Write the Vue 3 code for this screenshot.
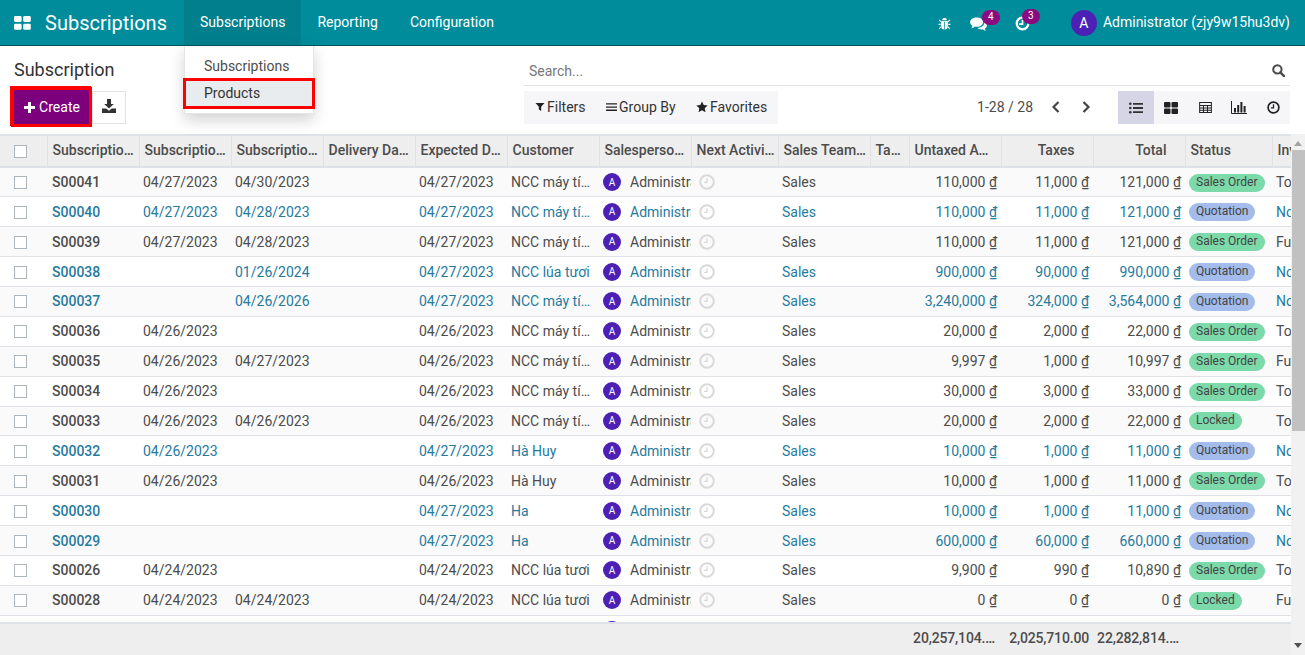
<script setup>
const columns = [47, 92, 92, 92, 92, 92, 92, 92, 87, 92, 39, 92, 92, 92, 87, 140]

const headers = [
  { label: 'Subscription Reference' },
  { label: 'Subscription Start Date' },
  { label: 'Subscription End Date' },
  { label: 'Delivery Date Planned' },
  { label: 'Expected Date' },
  { label: 'Customer' },
  { label: 'Salesperson Name' },
  { label: 'Next Activity' },
  { label: 'Sales Team Name' },
  { label: 'Tags', cls: 'tags' },
  { label: 'Untaxed Amount', cls: 'untaxed' },
  { label: 'Taxes', cls: 'num' },
  { label: 'Total', cls: 'num' },
  { label: 'Status' },
  { label: 'Invoice Status' },
]

const pc = 'NCC máy tính Hà Nội'
const rice = 'NCC lúa tươi'
const so = 'Sales Order'
const qt = 'Quotation'
const lk = 'Locked'
const toInv = 'To Invoice'
const noInv = 'Nothing to Invoice'
const full = 'Fully Invoiced'

const rows = [
  ['S00041', '04/27/2023', '04/30/2023', '04/27/2023', pc, '110,000', '11,000', '121,000', so, toInv],
  ['S00040', '04/27/2023', '04/28/2023', '04/27/2023', pc, '110,000', '11,000', '121,000', qt, noInv],
  ['S00039', '04/27/2023', '04/28/2023', '04/27/2023', pc, '110,000', '11,000', '121,000', so, full],
  ['S00038', '', '01/26/2024', '04/27/2023', rice, '900,000', '90,000', '990,000', qt, noInv],
  ['S00037', '', '04/26/2026', '04/27/2023', pc, '3,240,000', '324,000', '3,564,000', qt, noInv],
  ['S00036', '04/26/2023', '', '04/26/2023', pc, '20,000', '2,000', '22,000', so, toInv],
  ['S00035', '04/26/2023', '04/27/2023', '04/26/2023', pc, '9,997', '1,000', '10,997', so, full],
  ['S00034', '04/26/2023', '', '04/26/2023', pc, '30,000', '3,000', '33,000', so, toInv],
  ['S00033', '04/26/2023', '04/26/2023', '04/26/2023', pc, '20,000', '2,000', '22,000', lk, toInv],
  ['S00032', '04/26/2023', '', '04/27/2023', 'Hà Huy', '10,000', '1,000', '11,000', qt, noInv],
  ['S00031', '04/26/2023', '', '04/26/2023', 'Hà Huy', '10,000', '1,000', '11,000', so, toInv],
  ['S00030', '', '', '04/27/2023', 'Ha', '10,000', '1,000', '11,000', qt, noInv],
  ['S00029', '', '', '04/27/2023', 'Ha', '600,000', '60,000', '660,000', qt, noInv],
  ['S00026', '04/24/2023', '', '04/24/2023', rice, '9,900', '990', '10,890', so, toInv],
  ['S00028', '04/24/2023', '04/24/2023', '04/24/2023', rice, '0', '0', '0', lk, full],
  ['S00027', '04/24/2023', '', '04/24/2023', rice, '9,900', '990', '10,890', so, toInv],
]
</script>

<template>
  <div class="app">
    <header class="navbar">
      <svg class="apps" viewBox="0 0 17 14" width="17" height="14">
        <rect x="0" y="0" width="7.6" height="6" rx="1.4" />
        <rect x="9.2" y="0" width="7.6" height="6" rx="1.4" />
        <rect x="0" y="7.8" width="7.6" height="6" rx="1.4" />
        <rect x="9.2" y="7.8" width="7.6" height="6" rx="1.4" />
      </svg>
      <span class="brand">Subscriptions</span>
      <nav class="menu">
        <a class="active">Subscriptions</a>
        <a>Reporting</a>
        <a>Configuration</a>
      </nav>
      <div class="systray">
        <svg class="bug" viewBox="0 0 14 14" width="13" height="13">
          <path d="M4.400 3.600a2.600 2.600 0 0 1 5.200 0z" />
          <path d="M3.400 4.400h7.200v5.400a3.600 3.600 0 0 1-7.200 0z" />
          <path d="M3.200 5 1.200 3.200M10.800 5l2-1.800M3 8H.6M11 8h2.400M3.400 10.600 1.400 12.600M10.600 10.600l2 2" stroke="#fff" stroke-width="1.200" fill="none" />
          <path d="M7 5v8.500" stroke="#008c9b" stroke-width=".8" />
        </svg>
        <span class="tray-item chat">
          <svg viewBox="0 0 18 15" width="17" height="14">
            <path d="M7 .5c3.800 0 7 2.200 7 5s-3.200 5-7 5c-.7 0-1.400-.1-2-.2C4 11.300 2.700 12 1.200 12.200c.8-.8 1.200-1.700 1.300-2.700C1.100 8.500 0 7.100 0 5.500c0-2.800 3.200-5 7-5z" />
            <path d="M15.200 5.200c1.700.9 2.800 2.200 2.800 3.800 0 1.400-.9 2.600-2.200 3.400.1.800.4 1.500 1 2.200-1.300-.2-2.300-.7-3.100-1.500-.5.1-1.100.2-1.700.2-1.700 0-3.200-.6-4.200-1.500 4 0 7.800-2.200 7.400-6.600z" />
          </svg>
          <b class="count c4">4</b>
        </span>
        <span class="tray-item clock">
          <svg viewBox="0 0 16 16" width="15" height="15">
            <circle cx="8" cy="8" r="6.200" fill="none" stroke="#fff" stroke-width="2.400" />
            <path d="M8 4v4.600H4.400" fill="none" stroke="#fff" stroke-width="1.800" />
          </svg>
          <b class="count c3">3</b>
        </span>
        <span class="user">
          <span class="avatar big">A</span>
          <span class="user-name">Administrator (zjy9w15hu3dv)</span>
        </span>
      </div>
    </header>

    <div class="dropdown">
      <a>Subscriptions</a>
      <a class="marked">Products</a>
    </div>

    <section class="control-panel">
      <div class="cp-left">
        <h1>Subscription</h1>
        <div class="actions">
          <button class="create">
            <svg viewBox="0 0 11 11" width="11" height="11"><path d="M4 0h3v4h4v3H7v4H4V7H0V4h4z" /></svg>
            Create
          </button>
          <button class="download">
            <svg viewBox="0 0 14 14" width="14" height="14">
              <path d="M5 0h4v5h2.800L7 9.600 2.200 5H5z" />
              <path d="M0 9.400h4.200L7 11.800l2.800-2.400H14V14H0z" />
            </svg>
          </button>
        </div>
      </div>
      <div class="cp-right">
        <div class="search">
          <span>Search...</span>
          <svg viewBox="0 0 14 14" width="13" height="13">
            <circle cx="5.800" cy="5.800" r="4.500" fill="none" stroke="#4c4c4c" stroke-width="2.200" />
            <path d="M9 9l4 4" stroke="#4c4c4c" stroke-width="2.600" stroke-linecap="round" />
          </svg>
        </div>
        <div class="cp-bottom">
          <div class="filters">
            <span class="filter-item">
              <svg viewBox="0 0 10 10" width="10" height="9"><path d="M0 1h10L6.300 5.400V10L3.700 8.400v-3z" /></svg>
              Filters
            </span>
            <span class="filter-item">
              <svg viewBox="0 0 11 10" width="11" height="10"><path d="M0 1.200h11v1.300H0zM0 4.400h11v1.300H0zM0 7.600h11v1.300H0z" /></svg>
              Group By
            </span>
            <span class="filter-item">
              <svg viewBox="0 0 12 12" width="12" height="12"><path d="M6 .4l1.700 3.700 4 .5-3 2.700.8 4L6 9.300 2.500 11.300l.8-4-3-2.700 4-.5z" /></svg>
              Favorites
            </span>
          </div>
          <div class="pager">
            <span class="pager-text">1-28 / 28</span>
            <svg viewBox="0 0 10 14" width="10" height="14"><path d="M7.500 2 2.500 7l5 5" /></svg>
            <svg viewBox="0 0 10 14" width="10" height="14"><path d="M2.500 2l5 5-5 5" /></svg>
          </div>
          <div class="views">
            <span class="view on">
              <svg viewBox="0 0 14 12" width="14" height="12">
                <circle cx="1.300" cy="1.800" r="1.300" /><circle cx="1.300" cy="6" r="1.300" /><circle cx="1.300" cy="10.200" r="1.300" />
                <path d="M4 .9h10v1.800H4zM4 5.100h10v1.800H4zM4 9.300h10v1.800H4z" />
              </svg>
            </span>
            <span class="view">
              <svg viewBox="0 0 14 12" width="14" height="12">
                <rect width="6.500" height="5.400" rx="1" /><rect x="7.500" width="6.500" height="5.400" rx="1" />
                <rect y="6.600" width="6.500" height="5.400" rx="1" /><rect x="7.500" y="6.600" width="6.500" height="5.400" rx="1" />
              </svg>
            </span>
            <span class="view">
              <svg viewBox="0 0 14 12" width="13" height="11">
                <path d="M.6.6h12.800v10.800H.6zM.6 3.900h12.800M.6 6.600h12.800M.6 9.100h12.800M4.800 3.900v7.500M9.200 3.900v7.500" fill="none" stroke="#222" stroke-width="1.100" />
              </svg>
            </span>
            <span class="view">
              <svg viewBox="0 0 16 13" width="16" height="13">
                <path d="M.5 0v12.500H16" fill="none" stroke="#222" stroke-width="1" />
                <path d="M3 7h2v4.500H3zM6.200 4h2v7.500h-2zM9.400 1h2v10.500h-2zM12.600 5h2v6.500h-2z" />
              </svg>
            </span>
            <span class="view">
              <svg viewBox="0 0 14 14" width="13" height="13">
                <circle cx="7" cy="7" r="5.800" fill="none" stroke="#222" stroke-width="1.800" />
                <path d="M7 3.500v4H4.200" fill="none" stroke="#222" stroke-width="1.400" />
              </svg>
            </span>
          </div>
        </div>
      </div>
    </section>

    <section class="content">
      <div class="list">
        <div class="scroller">
          <table class="grid">
            <colgroup>
              <col v-for="(w, i) in columns" :key="i" :style="{ width: w + 'px' }" />
            </colgroup>
            <thead>
              <tr>
                <th class="check"><i class="box"></i></th>
                <th v-for="h in headers" :key="h.label" :class="h.cls">{{ h.label }}</th>
              </tr>
            </thead>
            <tbody>
              <tr v-for="row in rows" :key="row[0]" :class="{ info: row[8] === 'Quotation' }">
                <td class="check"><i class="box"></i></td>
                <td class="ref">{{ row[0] }}</td>
                <td>{{ row[1] }}</td>
                <td>{{ row[2] }}</td>
                <td></td>
                <td>{{ row[3] }}</td>
                <td>{{ row[4] }}</td>
                <td class="person">
                  <div class="person-cell"><span class="avatar">A</span><span>Administrator</span></div>
                </td>
                <td class="activity">
                  <svg viewBox="0 0 16 16" width="16" height="16">
                    <circle cx="8" cy="8" r="6.800" fill="none" stroke="#d9d9d9" stroke-width="2" />
                    <path d="M8 4.200v4.200H5" fill="none" stroke="#d9d9d9" stroke-width="1.300" />
                  </svg>
                </td>
                <td>Sales</td>
                <td></td>
                <td class="amount">{{ row[5] }} ₫</td>
                <td class="amount">{{ row[6] }} ₫</td>
                <td class="amount">{{ row[7] }} ₫</td>
                <td class="status">
                  <span class="badge" :class="row[8] === 'Quotation' ? 'blue' : 'green'">{{ row[8] }}</span>
                </td>
                <td>{{ row[9] }}</td>
              </tr>
            </tbody>
          </table>
        </div>
        <table class="grid totals">
          <colgroup>
            <col v-for="(w, i) in columns" :key="i" :style="{ width: w + 'px' }" />
          </colgroup>
          <tbody>
            <tr>
              <td colspan="11"></td>
              <td>20,257,104.00</td>
              <td>2,025,710.00</td>
              <td>22,282,814.00</td>
              <td colspan="2"></td>
            </tr>
          </tbody>
        </table>
      </div>
      <div class="scrollbar">
        <i class="arrow up"></i>
        <i class="thumb"></i>
        <i class="arrow down"></i>
      </div>
    </section>
  </div>
</template>

<style scoped>
.app {
  position: relative;
  display: flex;
  flex-direction: column;
  width: 1305px;
  height: 655px;
  overflow: hidden;
  background: #fff;
  color: #4c4c4c;
  font-family: Roboto, "Noto Sans", sans-serif;
  font-size: 14px;
}

.navbar {
  display: flex;
  align-items: center;
  flex: none;
  height: 46px;
  box-sizing: border-box;
  padding-left: 14px;
  background: #008c9b;
  border-bottom: 1px solid #01555e;
  color: #fff;
}

.apps {
  fill: #fff;
}

.brand {
  margin-left: 14px;
  width: 139px;
  font-size: 20px;
}

.menu {
  display: flex;
  height: 100%;
}

.menu a {
  display: flex;
  align-items: center;
  padding: 0 16px 2px;
  font-size: 14px;
  box-sizing: border-box;
}

.menu a.active {
  background: #017f8d;
}

.systray {
  display: flex;
  align-items: center;
  margin-left: auto;
  padding-right: 15px;
}

.bug {
  fill: #fff;
  margin: 1px 19px 0 0;
}

.tray-item {
  position: relative;
  display: flex;
  margin-top: 2px;
  fill: #fff;
}

.chat {
  margin-right: 28px;
}

.clock {
  margin-right: 41px;
}

.count {
  position: absolute;
  top: -7px;
  left: 12px;
  min-width: 18px;
  height: 15px;
  border-radius: 8px;
  background: #8b0a7f;
  font-size: 10px;
  font-weight: 400;
  line-height: 14px;
  text-align: center;
}

.c3 {
  left: 7px;
}

.user {
  display: flex;
  align-items: center;
  gap: 6px;
}

.user-name {
  margin-bottom: 2px;
  font-size: 14px;
}

.avatar {
  display: inline-flex;
  align-items: center;
  justify-content: center;
  flex: none;
  width: 18px;
  height: 18px;
  border-radius: 50%;
  background: #4c1fb5;
  color: #fff;
  font-size: 10px;
}

.avatar.big {
  width: 26px;
  height: 26px;
  margin-top: 1px;
  font-size: 14px;
}

.dropdown {
  position: absolute;
  left: 184px;
  top: 46px;
  z-index: 5;
  width: 130px;
  height: 68px;
  box-sizing: border-box;
  padding-top: 7px;
  background: #fff;
  border: 1px solid #e4e4e4;
  border-top: 0;
  box-shadow: 0 6px 14px rgba(0, 0, 0, 0.18);
}

.dropdown a {
  display: block;
  height: 27px;
  padding-left: 19px;
  line-height: 27px;
}

.dropdown .marked {
  background: #e9ecef;
  outline: 3px solid #f00;
  outline-offset: -1px;
  color: #333;
}

.control-panel {
  display: flex;
  flex: none;
  height: 88px;
  box-sizing: border-box;
}

.cp-left {
  width: 524px;
  padding-left: 14px;
  box-sizing: border-box;
}

h1 {
  margin: 14px 0 11px;
  font-size: 18px;
  font-weight: 400;
  line-height: 20px;
  color: #333;
}

.actions {
  display: flex;
  align-items: flex-end;
  gap: 3px;
}

button {
  height: 33px;
  border-radius: 0;
  font-family: inherit;
  font-size: 14px;
  padding: 0;
}

.create {
  display: flex;
  align-items: center;
  justify-content: center;
  gap: 4px;
  width: 75px;
  height: 34px;
  margin-top: -1px;
  padding-left: 1px;
  border: 0;
  background: #7c007c;
  color: #fff;
  box-shadow: -1px -1px 0 3px #f00, 0 0 0 3px #f00;
  fill: #fff;
}

.download {
  width: 34px;
  border: 1px solid #e2e2e2;
  background: #fff;
  fill: #333;
}

.cp-right {
  flex: 1;
  padding-right: 15px;
}

.search {
  display: flex;
  align-items: center;
  justify-content: space-between;
  height: 39px;
  margin-top: 1px;
  padding: 9px 5px 0;
  box-sizing: border-box;
  border-bottom: 1px solid #dee2e6;
  color: #777;
}

.cp-bottom {
  display: flex;
  align-items: center;
  margin-top: 5px;
  height: 33px;
}

.filters {
  display: flex;
  align-items: center;
  gap: 20.5px;
  width: 254px;
  height: 100%;
  box-sizing: border-box;
  padding: 0 0 2px 11px;
  background: #f6f6f9;
  color: #333;
  fill: #222;
}

.filter-item {
  display: flex;
  align-items: center;
  gap: 2px;
}

.pager {
  display: flex;
  align-items: center;
  margin-left: auto;
  margin-right: 27px;
  padding-bottom: 2px;
}

.pager-text {
  margin-right: 18px;
}

.pager svg {
  fill: none;
  stroke: #444;
  stroke-width: 2.2;
  margin-right: 20px;
}

.pager svg:last-child {
  margin-right: 0;
}

.views {
  display: flex;
  height: 100%;
  width: 172px;
  background: #f6f6f9;
  fill: #222;
}

.view {
  display: flex;
  align-items: center;
  justify-content: center;
  flex: 1;
}

.view.on {
  flex: none;
  width: 36px;
  background: #d5d5e6;
  fill: #333;
}

.content {
  display: flex;
  flex: 1;
  min-height: 0;
}

.list {
  display: flex;
  flex-direction: column;
  width: 1291px;
  overflow: hidden;
}

.scroller {
  height: 489px;
  overflow: hidden;
}

.grid {
  table-layout: fixed;
  border-collapse: collapse;
  width: 1330px;
}

th {
  height: 31.9px;
  box-sizing: border-box;
  padding: 0 2px 2px 5px;
  background: #eee;
  border: 1px solid #dee2e6;
  border-width: 2px 0 2px 1px;
  color: #4c4c4c;
  font-weight: 500;
  text-align: left;
  white-space: nowrap;
  overflow: hidden;
  text-overflow: ellipsis;
}

th.num {
  padding-right: 18px;
  text-align: right;
}

th.tags {
  padding-right: 5px;
}

td {
  height: 29.9px;
  box-sizing: border-box;
  padding: 0 4px;
  border-top: 1px solid #dee2e6;
  white-space: nowrap;
  overflow: hidden;
  text-overflow: ellipsis;
}

tbody tr:nth-child(odd) td {
  background: #fafafa;
}

th.check,
td.check {
  padding: 1px 0 0 14px;
  text-align: left;
  border-left: 0;
}

.box {
  display: block;
  box-sizing: border-box;
  width: 13px;
  height: 13px;
  border: 1px solid #adb5bd;
  background: #fff;
}

.ref {
  padding-left: 5px;
  font-weight: 500;
}

tr.info td {
  color: #267a9e;
}

td.person {
  padding-right: 0;
  text-overflow: clip;
}

.person-cell {
  display: flex;
  align-items: center;
  gap: 9px;
  overflow: hidden;
}

.activity svg {
  display: block;
  margin-left: 4px;
}

.amount {
  text-align: right;
}

.badge {
  display: inline-block;
  height: 18px;
  padding: 0 7px;
  border-radius: 9px;
  color: #444;
  font-size: 12px;
  line-height: 17px;
}

.badge.green {
  background: #7cd9a9;
}

.badge.blue {
  background: #a3bcec;
}

.totals {
  flex: none;
}

.totals td {
  height: 32px;
  padding-bottom: 3px;
  background: #eee !important;
  border-top: 2px solid #dee2e6;
  font-weight: 500;
  letter-spacing: -0.15px;
  text-align: right;
}

.scrollbar {
  position: relative;
  width: 14px;
  background: #f1f1f1;
}

.thumb {
  position: absolute;
  top: 16px;
  left: 1px;
  right: 0;
  height: 281px;
  background: #c1c1c1;
}

.arrow {
  position: absolute;
  left: 3px;
  width: 0;
  height: 0;
  border-left: 4px solid transparent;
  border-right: 4px solid transparent;
}

.up {
  top: 7px;
  border-bottom: 5px solid #a3a3a3;
}

.down {
  bottom: 7px;
  border-top: 5px solid #505050;
}
</style>

<style>
html,
body {
  margin: 0;
  background: #fff;
}
</style>
